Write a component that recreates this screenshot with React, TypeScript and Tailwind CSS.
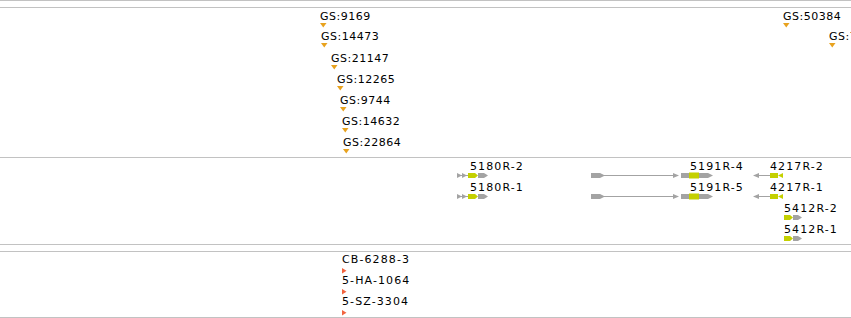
import React from "react";

const GS_FEATURES = [
  { label: "GS:9169", x: 320, y: 2 },
  { label: "GS:14473", x: 321, y: 22 },
  { label: "GS:21147", x: 331, y: 44 },
  { label: "GS:12265", x: 337, y: 65 },
  { label: "GS:9744", x: 340, y: 86 },
  { label: "GS:14632", x: 342, y: 107 },
  { label: "GS:22864", x: 343, y: 128 },
  { label: "GS:50384", x: 783, y: 2 },
  { label: "GS:7", x: 829, y: 22 },
];

const GENES = [
  { label: "5180R-2", x: 470, row: 0, kind: "a" },
  { label: "5180R-1", x: 470, row: 1, kind: "a" },
  { label: "5191R-4", x: 690, row: 0, kind: "b" },
  { label: "5191R-5", x: 690, row: 1, kind: "b" },
  { label: "4217R-2", x: 770, row: 0, kind: "c" },
  { label: "4217R-1", x: 770, row: 1, kind: "c" },
  { label: "5412R-2", x: 784, row: 2, kind: "d" },
  { label: "5412R-1", x: 784, row: 3, kind: "d" },
];

const MARKERS = [
  { label: "CB-6288-3", x: 342, y: 1 },
  { label: "5-HA-1064", x: 342, y: 22 },
  { label: "5-SZ-3304", x: 342, y: 43 },
];

const GRAY = "#a3a3a3";
const CDS = "#c4d000";

function GeneGlyph({ kind, cy }: { kind: string; cy: number }) {
  const t = cy - 2.5;
  const b = cy + 2.5;
  if (kind === "a") {
    return (
      <g>
        <polygon points={`457,${t} 462,${cy} 457,${b}`} fill={GRAY} />
        <polygon points={`462,${t} 467,${cy} 462,${b}`} fill={GRAY} />
        <line x1={457} y1={cy} x2={468} y2={cy} stroke={GRAY} />
        <polygon points={`468,${t} 475,${t} 478,${cy} 475,${b} 468,${b}`} fill={CDS} />
        <polygon points={`478,${t} 484,${t} 488,${cy} 484,${b} 478,${b}`} fill={GRAY} />
      </g>
    );
  }
  if (kind === "b") {
    return (
      <g>
        <polygon points={`591,${t} 600,${t} 605,${cy} 600,${b} 591,${b}`} fill={GRAY} />
        <line x1={604} y1={cy} x2={675} y2={cy} stroke={GRAY} />
        <polygon points={`673,${t} 679,${cy} 673,${b}`} fill={GRAY} />
        <rect x={681} y={t} width={8} height={5} fill={GRAY} />
        <rect x={689} y={t - 0.5} width={10} height={6} fill={CDS} />
        <polygon points={`699,${t} 708,${t} 713,${cy} 708,${b} 699,${b}`} fill={GRAY} />
      </g>
    );
  }
  if (kind === "c") {
    return (
      <g>
        <polygon points={`753,${cy} 759,${t} 759,${b}`} fill={GRAY} />
        <line x1={758} y1={cy} x2={770} y2={cy} stroke={GRAY} />
        <rect x={770} y={t} width={8} height={5} fill={CDS} />
        <polygon points={`778,${cy} 783,${t} 783,${b}`} fill={CDS} />
      </g>
    );
  }
  return (
    <g>
      <polygon points={`784,${t} 790,${t} 793,${cy} 790,${b} 784,${b}`} fill={CDS} />
      <polygon points={`793,${t} 798,${t} 802,${cy} 798,${b} 793,${b}`} fill={GRAY} />
    </g>
  );
}

const App = () => {
  return (
    <div className="w-[851px] h-[318px] bg-white overflow-hidden flex flex-col">
      {/* previous track edge */}
      <div className="h-px bg-[#c2c2c2]" />
      <div className="h-[6px]" />

      {/* GS track */}
      <div className="relative h-[151px] border-y border-[#c2c2c2] overflow-hidden">
        {GS_FEATURES.map((f) => (
          <div key={f.label} className="absolute flex flex-col" style={{ left: f.x, top: f.y }}>
            <span className="whitespace-nowrap text-[11px] leading-[13px] text-black font-['DejaVu_Sans',sans-serif] tracking-[0.5px]">
              {f.label}
            </span>
            <svg width="7" height="5" viewBox="0 0 7 5">
              <polygon points="0,0 6.5,0 3.25,4.5" fill="#e8a21e" />
            </svg>
          </div>
        ))}
      </div>

      {/* gene track */}
      <div className="relative h-[87px] border-b border-[#c2c2c2] overflow-hidden">
        <svg className="absolute left-0 top-0" width="851" height="86">
          {GENES.map((g) => (
            <GeneGlyph key={g.label} kind={g.kind} cy={17.5 + g.row * 21} />
          ))}
        </svg>
        {GENES.map((g) => (
          <span
            key={g.label}
            className="absolute whitespace-nowrap text-[11px] leading-[13px] text-black font-['DejaVu_Sans',sans-serif] tracking-[1.1px]"
            style={{ left: g.x, top: 2 + g.row * 21 }}
          >
            {g.label}
          </span>
        ))}
      </div>

      <div className="h-[6px]" />

      {/* marker track */}
      <div className="relative h-[67px] border-y border-[#c2c2c2] overflow-hidden">
        {MARKERS.map((m) => (
          <div key={m.label} className="absolute flex flex-col" style={{ left: m.x, top: m.y }}>
            <span className="whitespace-nowrap text-[11px] leading-[13px] text-black font-['DejaVu_Sans',sans-serif] tracking-[1.1px]">
              {m.label}
            </span>
            <svg className="mt-[2px]" width="5" height="6" viewBox="0 0 5 6">
              <polygon points="0,0 4.5,2.75 0,5.5" fill="#f2643f" />
            </svg>
          </div>
        ))}
      </div>
    </div>
  );
};

export default App;
